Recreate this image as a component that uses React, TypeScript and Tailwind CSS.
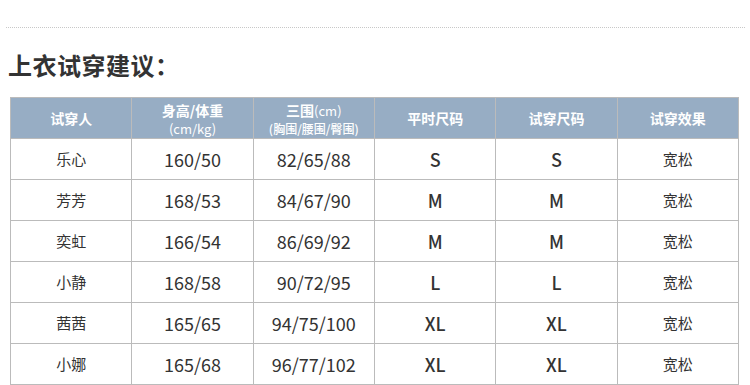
const rows = [
  ["乐心", "160/50", "82/65/88", "S", "S", "宽松"],
  ["芳芳", "168/53", "84/67/90", "M", "M", "宽松"],
  ["奕虹", "166/54", "86/69/92", "M", "M", "宽松"],
  ["小静", "168/58", "90/72/95", "L", "L", "宽松"],
  ["茜茜", "165/65", "94/75/100", "XL", "XL", "宽松"],
  ["小娜", "165/68", "96/77/102", "XL", "XL", "宽松"],
];

export default function App() {
  return (
    <div
      className="w-[750px] h-[385px] bg-white overflow-hidden"
      style={{ fontFamily: '"Noto Sans CJK SC", "Noto Sans", sans-serif' }}
    >
      <div className="pt-[27px] px-[6px]">
        <div className="border-t border-dotted border-[#c8c8c8] w-[739px]" />
      </div>
      <h2 className="mt-[22px] ml-[8px] text-[24px] leading-[30px] font-bold text-[#333] tracking-[0.5px]">
        上衣试穿建议：
      </h2>
      <table className="mt-[17px] ml-[10px] w-[729px] table-fixed border-collapse text-center">
        <thead>
          <tr className="bg-[#97adc4] text-white h-[41px]">
            <th className="border border-[#bbbbbb] text-[14px] font-bold">试穿人</th>
            <th className="border border-[#bbbbbb] font-bold">
              <div className="text-[14px] leading-[20px]">身高/体重</div>
              <div className="text-[13px] leading-[17px] font-normal">(cm/kg)</div>
            </th>
            <th className="border border-[#bbbbbb] font-bold">
              <div className="text-[13px] leading-[20px] font-normal">
                <span className="font-bold text-[14px]">三围</span>(cm)
              </div>
              <div className="text-[12px] leading-[16px] font-medium">(胸围/腰围/臀围)</div>
            </th>
            <th className="border border-[#bbbbbb] text-[14px] font-bold">平时尺码</th>
            <th className="border border-[#bbbbbb] text-[14px] font-bold">试穿尺码</th>
            <th className="border border-[#bbbbbb] text-[14px] font-bold">试穿效果</th>
          </tr>
        </thead>
        <tbody className="text-[#333]">
          {rows.map((r) => (
            <tr key={r[0]} className="h-[41px]">
              <td className="border border-[#bbbbbb] text-[15px]">{r[0]}</td>
              <td className="border border-[#bbbbbb] text-[18px]">{r[1]}</td>
              <td className="border border-[#bbbbbb] text-[18px]">{r[2]}</td>
              <td className="border border-[#bbbbbb] text-[18px] font-medium">{r[3]}</td>
              <td className="border border-[#bbbbbb] text-[18px] font-medium">{r[4]}</td>
              <td className="border border-[#bbbbbb] text-[15px]">{r[5]}</td>
            </tr>
          ))}
        </tbody>
      </table>
    </div>
  );
}
